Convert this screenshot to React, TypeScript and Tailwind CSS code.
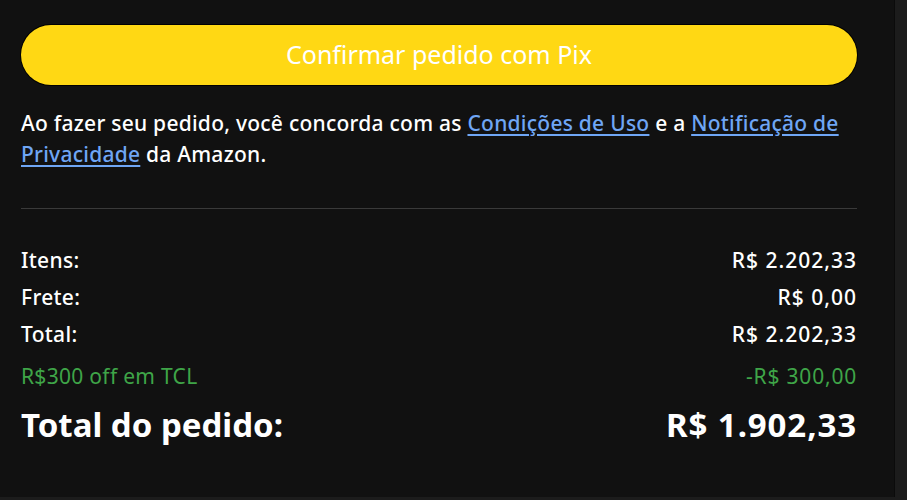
const rows = [
  { label: 'Itens:', value: 'R$ 2.202,33' },
  { label: 'Frete:', value: 'R$ 0,00' },
  { label: 'Total:', value: 'R$ 2.202,33' },
];

export default function App() {
  return (
    <div className="flex h-[500px] w-full bg-[#1c1c1c] font-['Noto_Sans',sans-serif] text-white">
      <div className="h-[497px] w-[895px] border-r border-[#0b0b0b] bg-[#111111] pl-[21px] pr-[37px] pt-[25px]">
        <button className="flex h-[60px] w-full items-center justify-center rounded-full bg-[#ffd814] text-[25px] text-white ring-1 ring-black">
          Confirmar pedido com Pix
        </button>

        <p className="mt-[23px] text-[21px] font-medium leading-[31px] tracking-[0.25px]">
          Ao fazer seu pedido, você concorda com as{' '}
          <a href="#" className="text-[#6fa6f5] underline underline-offset-[3px]">Condições de Uso</a> e a{' '}
          <a href="#" className="text-[#6fa6f5] underline underline-offset-[3px]">Notificação de Privacidade</a> da Amazon.
        </p>

        <div className="mt-[38px] h-px bg-[#3a3a3a]" />

        <div className="mt-[38px] flex flex-col gap-[10px] text-[21px] font-medium leading-[27px]">
          {rows.map((r) => (
            <div key={r.label} className="flex justify-between">
              <span className="tracking-[0.3px]">{r.label}</span>
              <span className="tracking-[1px]">{r.value}</span>
            </div>
          ))}
          <div className="mt-[5px] flex justify-between font-normal text-[#3fa548]">
            <span className="tracking-[0.3px]">R$300 off em TCL</span>
            <span className="tracking-[0.8px]">-R$ 300,00</span>
          </div>
        </div>

        <div className="mt-[15px] flex items-center justify-between text-[33px] font-bold leading-[40px]">
          <span>Total do pedido:</span>
          <span className="tracking-[0.9px]">R$ 1.902,33</span>
        </div>
      </div>
    </div>
  );
}
